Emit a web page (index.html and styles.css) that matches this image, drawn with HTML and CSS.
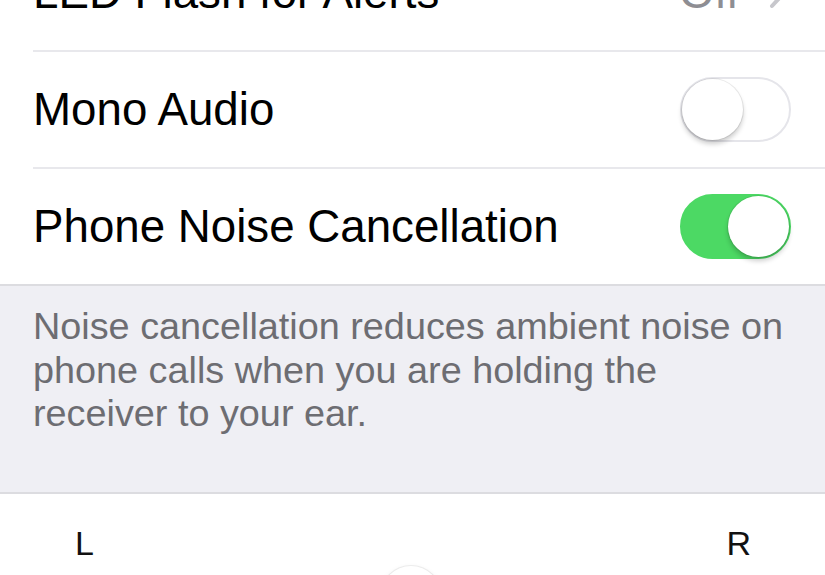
FILE: index.html
```html
<!DOCTYPE html>
<html>
<head>
<meta charset="utf-8">
<link rel="stylesheet" href="styles.css">
</head>
<body>
<div class="screen">
  <div class="group">
    <div class="row row-first">
      <div class="row-inner">
        <span class="label">LED Flash for Alerts</span>
        <span class="detail">Off</span>
        <svg class="chevron" width="18" height="32" viewBox="0 0 18 32"><polyline points="3,3 15,16 3,29" fill="none" stroke="#c7c7cc" stroke-width="4" stroke-linecap="round" stroke-linejoin="round"/></svg>
      </div>
    </div>
    <div class="row">
      <div class="row-inner">
        <span class="label">Mono Audio</span>
        <span class="switch"><span class="knob"></span></span>
      </div>
    </div>
    <div class="row">
      <div class="row-inner last">
        <span class="label">Phone Noise Cancellation</span>
        <span class="switch on"><span class="knob"></span></span>
      </div>
    </div>
  </div>
  <div class="footer">
    <p class="footer-text">Noise cancellation reduces ambient noise on phone calls when you are holding the receiver to your ear.</p>
  </div>
  <div class="balance">
    <div class="lr"><span>L</span><span>R</span></div>
    <div class="slider"><span class="thumb"></span></div>
  </div>
</div>
</body>
</html>
```

FILE: styles.css
```css
html, body {
  margin: 0;
  padding: 0;
  background: #ffffff;
  overflow: hidden;
}
.screen {
  width: 825px;
  height: 575px;
  overflow: hidden;
  font-family: "Liberation Sans", Arial, sans-serif;
}
.group {
  background: #ffffff;
  border-bottom: 2px solid #dcdce0;
}
.row {
  padding-left: 33px;
}
.row-first {
  margin-top: -65px;
}
.row-inner {
  height: 115px;
  display: flex;
  align-items: center;
  padding-right: 34px;
  border-bottom: 2px solid #e8e8ec;
}
.row-inner.last {
  border-bottom: none;
}
.label {
  flex: 1;
  font-size: 45.7px;
  color: #000000;
  white-space: nowrap;
}
.detail {
  font-size: 45.7px;
  color: #8e8e93;
  margin-right: 30px;
}
.chevron {
  margin-right: 4px;
}
.switch {
  position: relative;
  width: 111px;
  height: 65px;
  border-radius: 33px;
  box-sizing: border-box;
  border: 2px solid #e5e5ea;
  background: #ffffff;
  flex: none;
}
.switch .knob {
  position: absolute;
  top: 0;
  left: 0;
  width: 61px;
  height: 61px;
  border-radius: 50%;
  background: #ffffff;
  box-shadow: 0 0 0 1px rgba(0,0,0,0.08), 0 4px 5px rgba(0,0,0,0.2);
}
.switch.on {
  background: #4cd964;
  border-color: #4cd964;
}
.switch.on .knob {
  left: auto;
  right: 0;
}
.footer {
  background: #efeff4;
  border-bottom: 2px solid #dcdce0;
  padding: 19px 33px 0 33px;
  height: 187px;
}
.footer-text {
  margin: 0;
  font-size: 37.8px;
  line-height: 43.5px;
  color: #6d6d72;
  width: 756px;
}
.balance {
  padding: 29px 0 0 0;
}
.lr {
  display: flex;
  justify-content: space-between;
  padding: 0 74px 0 75px;
  font-size: 34px;
  line-height: 40px;
  color: #111111;
}
.slider {
  display: flex;
  justify-content: center;
  padding-top: 3px;
  margin-left: -4px;
}
.thumb {
  display: block;
  width: 60px;
  height: 60px;
  border-radius: 50%;
  background: #ffffff;
  box-shadow: 0 0 0 1px rgba(0,0,0,0.06), 0 3px 6px rgba(0,0,0,0.15);
}
```
